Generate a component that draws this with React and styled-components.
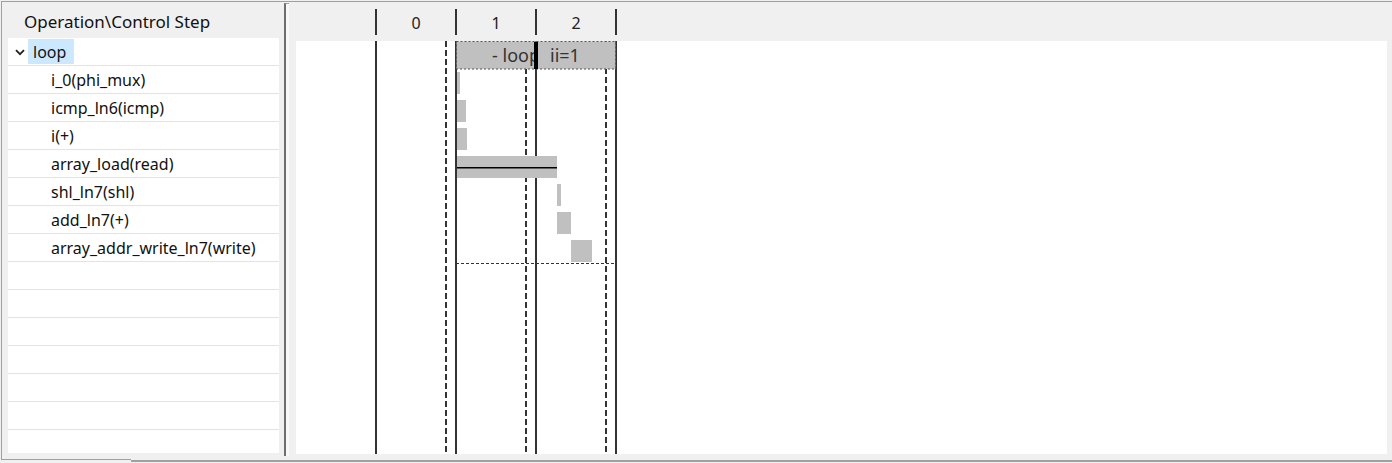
import React from "react";
import styled, { createGlobalStyle } from "styled-components";

const Global = createGlobalStyle`
  html, body {
    margin: 0;
    padding: 0;
    background: #f0f0f0;
  }
  body {
    font-family: "Noto Sans", "Open Sans", sans-serif;
  }
`;

const ops = [
  "i_0(phi_mux)",
  "icmp_ln6(icmp)",
  "i(+)",
  "array_load(read)",
  "shl_ln7(shl)",
  "add_ln7(+)",
  "array_addr_write_ln7(write)",
];

// bars in chart coordinates (origin = top-left of white body)
const bars = [
  { x: 161, w: 3 },
  { x: 161, w: 9 },
  { x: 161, w: 10 },
  { x: 161, w: 100, line: true },
  { x: 261, w: 4 },
  { x: 261, w: 14 },
  { x: 275, w: 21 },
];

const steps = ["0", "1", "2"];

export default function App() {
  const emptyRows = Array.from({ length: 8 });
  return (
    <Root>
      <Global />
      <Main>
        <LeftPane>
          <LeftHeader>Operation\Control Step</LeftHeader>
          <List>
            <Row>
              <Chevron width="10" height="7" viewBox="0 0 10 7">
                <path d="M1 1.2 L5 5.2 L9 1.2" fill="none" stroke="#222" strokeWidth="1.8" />
              </Chevron>
              <Selected>loop</Selected>
            </Row>
            {ops.map((o) => (
              <Row key={o} $indent>
                {o}
              </Row>
            ))}
            {emptyRows.map((_, i) => (
              <Row key={i} />
            ))}
          </List>
        </LeftPane>
        <Splitter />
        <RightPane>
          <StepHeader>
            <StepSpacer />
            {steps.map((s, i) => (
              <StepCell key={s} $last={i === steps.length - 1}>
                {s}
              </StepCell>
            ))}
          </StepHeader>
          <Body>
            <Chart width="1091" height="413">
              <defs>
                <clipPath id="loopClip">
                  <rect x="160" y="0" width="78" height="28" />
                </clipPath>
              </defs>
              {[79, 159, 239, 319].map((x) => (
                <rect key={x} x={x} y="0" width="2" height="413" fill="#333" />
              ))}
              {[150, 230, 310].map((x) => (
                <line key={x} x1={x} y1="0" x2={x} y2="413" stroke="#333" strokeWidth="2" strokeDasharray="6 3" />
              ))}
              <rect x="160.5" y="0.5" width="159" height="27.5" fill="#c0c0c0" stroke="#555" strokeWidth="1" strokeDasharray="2 2" />
              <rect x="238" y="1" width="4" height="27" fill="#000" />
              <g clipPath="url(#loopClip)">
                <LoopText x="244" y="21" textAnchor="end">- loop</LoopText>
              </g>
              <LoopText x="254" y="21">ii=1</LoopText>
              {bars.map((b, i) => (
                <g key={i}>
                  <rect x={b.x} y={31 + 28 * i} width={b.w} height="22" fill="#c0c0c0" />
                  {b.line && <rect x={b.x} y={31 + 28 * i + 11} width={b.w} height="1.5" fill="#000" />}
                </g>
              ))}
              <line x1="160" y1="222.5" x2="320" y2="222.5" stroke="#333" strokeWidth="1" strokeDasharray="3 2" />
            </Chart>
          </Body>
        </RightPane>
      </Main>
      <BottomBar>
        <BottomLeft />
        <BottomRight />
      </BottomBar>
    </Root>
  );
}

const Root = styled.div`
  width: 1392px;
  height: 463px;
  display: flex;
  flex-direction: column;
  overflow: hidden;
  background: #f0f0f0;
  color: #000;
`;

const Main = styled.div`
  display: flex;
  margin: 1px 0 0 1px;
  height: 458px;
  border-top: 1px solid #a0a0a0;
  border-left: 1px solid #a0a0a0;
`;

const LeftPane = styled.div`
  width: 282px;
  display: flex;
  flex-direction: column;
`;

const LeftHeader = styled.div`
  height: 36px;
  display: flex;
  align-items: center;
  padding: 3px 0 0 22px;
  box-sizing: border-box;
  font-size: 17px;
  color: #111;
`;

const List = styled.div`
  margin: 0 5px 0 6px;
  height: 415px;
  background: #fff;
  overflow: hidden;
`;

const Row = styled.div`
  height: 28px;
  flex-shrink: 0;
  border-bottom: 1px solid #e3e3e3;
  display: flex;
  align-items: center;
  box-sizing: border-box;
  padding-left: ${(p) => (p.$indent ? "43px" : "7px")};
  padding-top: 1px;
  font-size: 16px;
  color: #111;
  white-space: nowrap;
`;

const Chevron = styled.svg`
  margin-right: 3px;
`;

const Selected = styled.span`
  background: #cce8ff;
  height: 25px;
  display: flex;
  align-items: center;
  padding: 0 8px 0 5px;
  margin-top: -1px;
`;

const Splitter = styled.div`
  width: 3px;
  margin-top: 1px;
  margin-bottom: 4px;
  border-left: 2px solid #6e6e6e;
  border-top: 1px solid #a0a0a0;
  background: #f8f8f8;
`;

const RightPane = styled.div`
  flex: 1;
  display: flex;
  flex-direction: column;
`;

const StepHeader = styled.div`
  height: 39px;
  display: flex;
  align-items: center;
`;

const StepSpacer = styled.div`
  width: 86px;
`;

const StepCell = styled.div`
  width: 78px;
  height: 24px;
  padding-top: 2px;
  border-left: 2px solid #333;
  border-right: ${(p) => (p.$last ? "2px solid #333" : "none")};
  display: flex;
  align-items: center;
  justify-content: center;
  font-size: 16px;
  color: #222;
`;

const Body = styled.div`
  margin: 0 5px 0 7px;
  height: 413px;
  background: #fff;
  overflow: hidden;
`;

const Chart = styled.svg`
  display: block;
`;

const LoopText = styled.text`
  font-family: "Noto Sans", "Open Sans", sans-serif;
  font-size: 18px;
  fill: #333;
`;

const BottomBar = styled.div`
  display: flex;
  height: 3px;
`;

const BottomLeft = styled.div`
  width: 130px;
  margin-left: 1px;
  border-top: 1px solid #a0a0a0;
  margin-top: -1px;
`;

const BottomRight = styled.div`
  flex: 1;
  border-top: 2px solid #a0a0a0;
`;
